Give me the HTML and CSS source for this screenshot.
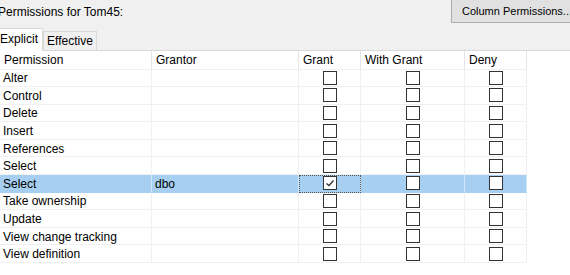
FILE: index.html
```html
<!DOCTYPE html>
<html lang="en">
<head>
    <meta charset="UTF-8">
    <title>Permissions</title>
    <link rel="stylesheet" href="styles.css">
</head>
<body>
    <div class="top">
        <span class="title">Permissions for Tom45:</span>
        <button class="btn">Column Permissions...</button>
    </div>

    <div class="tabs">
        <div class="tab active">Explicit</div>
        <div class="tab">Effective</div>
    </div>

    <div class="grid">
        <div class="row head">
            <div class="cell">Permission</div>
            <div class="cell">Grantor</div>
            <div class="cell">Grant</div>
            <div class="cell">With Grant</div>
            <div class="cell">Deny</div>
        </div>
        <div id="rows"></div>
    </div>

    <script>
        const perms = [
            ['Alter', ''],
            ['Control', ''],
            ['Delete', ''],
            ['Insert', ''],
            ['References', ''],
            ['Select', ''],
            ['Select', 'dbo', true],
            ['Take ownership', ''],
            ['Update', ''],
            ['View change tracking', ''],
            ['View definition', '']
        ];

        const tick = '<svg width="12" height="12" viewBox="0 0 12 12"><path d="M2.5 6.5 L5 8.5 L9.5 3.5" fill="none" stroke="#333" stroke-width="1.3"/></svg>';

        let html = '';
        for (const [name, grantor, sel] of perms) {
            html += `
                <div class="row${sel ? ' selected' : ''}">
                    <div class="cell">${name}</div>
                    <div class="cell">${grantor}</div>
                    <div class="cell box${sel ? ' focus' : ''}"><span class="check">${sel ? tick : ''}</span></div>
                    <div class="cell box"><span class="check"></span></div>
                    <div class="cell box"><span class="check"></span></div>
                </div>`;
        }
        document.getElementById('rows').innerHTML = html;
    </script>
</body>
</html>
```

FILE: styles.css
```css
body {
    margin: 0;
    font-family: 'Liberation Sans', Arial, sans-serif;
    font-size: 12px;
    color: #000;
    background: #fff;
    overflow: hidden;
}

.top {
    display: flex;
    justify-content: space-between;
    align-items: flex-start;
    height: 27px;
    background: #f0f0f0;
}

.title {
    margin-left: -2px;
    margin-top: 5px;
}

.btn {
    flex-shrink: 0;
    width: 119px;
    height: 23px;
    padding: 0 0 0 10px;
    text-align: left;
    white-space: nowrap;
    font-family: inherit;
    font-size: 11px;
    background: #e1e1e1;
    border: 1px solid #adadad;
    border-top: none;
    border-right: none;
}

.tabs {
    display: flex;
    align-items: flex-end;
    height: 23px;
    background: #f0f0f0;
    border-bottom: 1px solid #d9d9d9;
    margin-left: -5px;
}

.tab {
    height: 18px;
    line-height: 18px;
    padding: 0 3px 0 3px;
    border: 1px solid #d9d9d9;
    border-bottom: none;
    background: #f0f0f0;
}

.tab.active {
    height: 22px;
    line-height: 20px;
    background: #fff;
    margin-bottom: -1px;
    padding: 0 4px 0 4px;
}

.grid {
    width: 527px;
}

.row {
    display: grid;
    grid-template-columns: 152px 147px 62px 104px 62px;
    height: 17.6px;
}

.row.head {
    height: 18.5px;
}

.cell {
    box-sizing: border-box;
    padding-left: 3px;
    padding-top: 1px;
    border-right: 1px solid #f0f0f0;
    border-bottom: 1px solid #f0f0f0;
    display: flex;
    align-items: center;
    white-space: nowrap;
}

.head .cell {
    padding-left: 4px;
    border-right-color: #e5e5e5;
}

.row.selected .cell {
    background: #a6cff2;
    border-right-color: #cfe5f8;
    border-bottom-color: #a6cff2;
}

.box {
    justify-content: center;
    padding-left: 0;
    padding-top: 0;
}

.check {
    box-sizing: border-box;
    width: 14px;
    height: 14px;
    border: 1px solid #333;
    background: #fff;
    display: flex;
    align-items: center;
    justify-content: center;
}

.row.selected .cell.focus {
    outline: 1px dotted #555;
    outline-offset: -1px;
}
```
